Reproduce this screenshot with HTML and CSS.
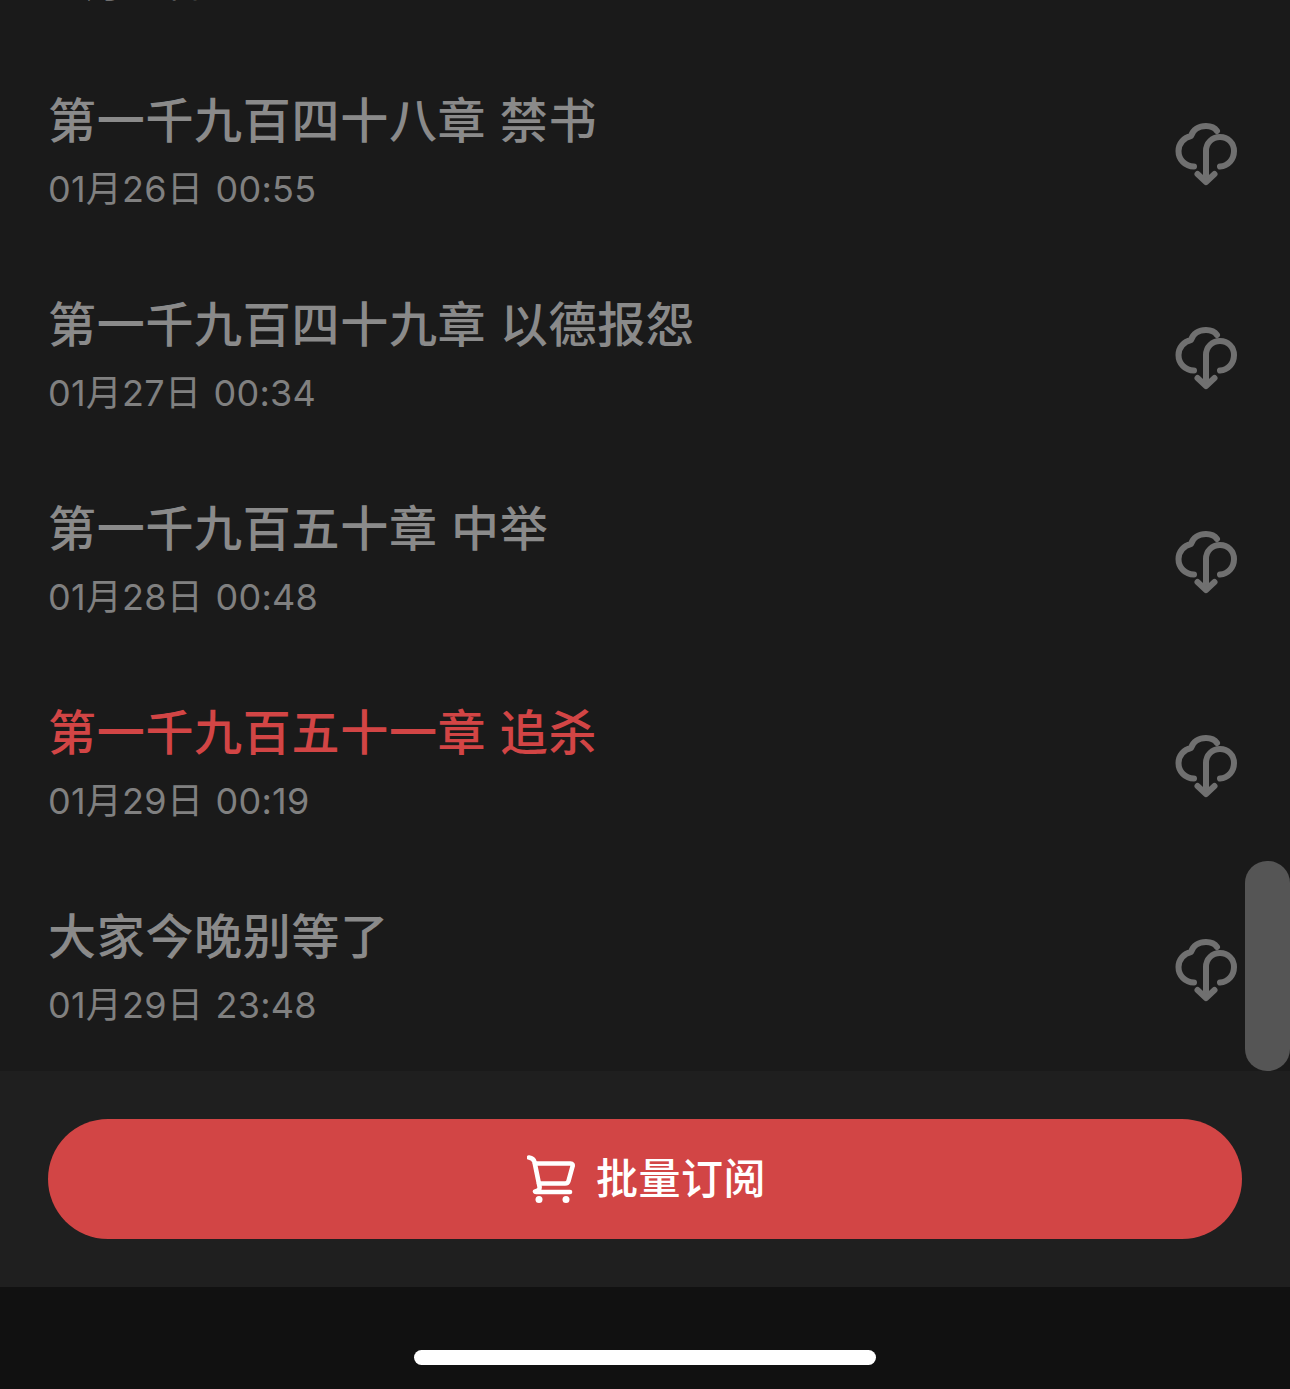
FILE: index.html
```html
<!DOCTYPE html>
<html lang="zh">
<head>
<meta charset="utf-8">
<title>目录</title>
<link rel="stylesheet" href="styles.css">
</head>
<body>
<svg class="defs" width="0" height="0" aria-hidden="true">
  <symbol id="cloud" viewBox="25 22 62 64">
    <g fill="none" stroke="currentColor" stroke-width="6" stroke-linecap="round" stroke-linejoin="round">
      <path d="M44 65.500C35 65.500 28.500 58.500 28.500 50C28.500 42.500 34 36.500 41 35C43 28.500 49 25 56 25C61 25 65 27 67 30"/>
      <path d="M56 79V50C56 42 62 36 70 36C78 36 84 42 84 50C84 58.500 78 65 70 65.500"/>
      <path d="M47.500 73L56 81L64.500 73"/>
    </g>
  </symbol>
</svg>
<main class="page">
  <section class="list">
    <article class="row">
      <div class="text"><h2 class="title">第一千九百四十七章 归来</h2><p class="date">01月25日 00:41</p></div>
      <svg class="cloud"><use href="#cloud"/></svg>
    </article>
    <article class="row">
      <div class="text"><h2 class="title">第一千九百四十八章 禁书</h2><p class="date">01月26日 00:55</p></div>
      <svg class="cloud"><use href="#cloud"/></svg>
    </article>
    <article class="row">
      <div class="text"><h2 class="title">第一千九百四十九章 以德报怨</h2><p class="date">01月27日 00:34</p></div>
      <svg class="cloud"><use href="#cloud"/></svg>
    </article>
    <article class="row">
      <div class="text"><h2 class="title">第一千九百五十章 中举</h2><p class="date">01月28日 00:48</p></div>
      <svg class="cloud"><use href="#cloud"/></svg>
    </article>
    <article class="row">
      <div class="text"><h2 class="title title-active">第一千九百五十一章 追杀</h2><p class="date">01月29日 00:19</p></div>
      <svg class="cloud"><use href="#cloud"/></svg>
    </article>
    <article class="row">
      <div class="text"><h2 class="title">大家今晚别等了</h2><p class="date">01月29日 23:48</p></div>
      <svg class="cloud"><use href="#cloud"/></svg>
    </article>
    <div class="scroll-thumb"></div>
  </section>
  <footer class="footer">
    <button class="buy" type="button">
      <svg class="cart" viewBox="0 0 48 48" aria-hidden="true">
        <g fill="none" stroke="#fff" stroke-width="4.600" stroke-linecap="round" stroke-linejoin="round">
          <path d="M2 2.500C5.500 3 6.800 4 7.500 7L12.500 31.500C13 34 11.500 36 8 36.500"/>
          <path d="M8 8.500H43.500C45.500 8.500 46 10 45.500 11.500L41.500 26C41 28 40 28.500 38 28.500H12"/>
          <path d="M9 37H43"/>
        </g>
        <circle cx="12" cy="44.500" r="3.500" fill="#fff"/>
        <circle cx="39" cy="44.500" r="3.500" fill="#fff"/>
      </svg>
      <span class="buy-label">批量订阅</span>
    </button>
  </footer>
  <div class="home-bar"><span class="home-indicator"></span></div>
</main>
</body>
</html>
```
FILE: styles.css
```css
* { box-sizing: border-box; }
html, body { margin: 0; padding: 0; background: #111; }
body { font-family: "Noto Sans CJK SC", "Inter", sans-serif; }
.defs { position: absolute; }
.page { width: 1290px; height: 1389px; display: flex; flex-direction: column; overflow: hidden; }
.list {
  position: relative;
  height: 1071px;
  flex: none;
  background: #1a1a1a;
  display: flex;
  flex-direction: column;
  justify-content: flex-end;
  overflow: hidden;
}
.row {
  flex: none;
  height: 204px;
  padding: 0 53px 0 48px;
  display: flex;
  align-items: center;
  justify-content: space-between;
}
.text { display: flex; flex-direction: column; gap: 18px; padding-bottom: 6px; }
.title {
  margin: 0;
  font-size: 48px;
  line-height: 60px;
  font-weight: 500;
  color: #8a8a8a;
  letter-spacing: 0.7px;
  word-spacing: 2px;
  white-space: nowrap;
}
.title-active { color: #d24545; }
.date {
  margin: 0;
  font-family: "Inter", "Noto Sans CJK SC", sans-serif;
  font-size: 36px;
  line-height: 48px;
  color: #808080;
  letter-spacing: 0.25px;
  word-spacing: 2px;
  white-space: nowrap;
}
.cloud { width: 62px; height: 64px; color: #707070; flex: none; margin-top: 4px; }
.scroll-thumb {
  position: absolute;
  right: 0;
  bottom: 0;
  width: 45px;
  height: 210px;
  border-radius: 22px;
  background: #555;
}
.footer {
  flex: none;
  height: 216px;
  padding: 48px;
  background: #1f1f1f;
}
.buy {
  width: 100%;
  height: 120px;
  border: 0;
  border-radius: 60px;
  background: #d24545;
  color: #fff;
  font-family: inherit;
  font-size: 42px;
  font-weight: 500;
  display: flex;
  align-items: center;
  justify-content: center;
  gap: 21px;
  padding: 0 0 0 3px;
}
.buy-label { padding-bottom: 8px; letter-spacing: 0.5px; }
.cart { width: 48px; height: 48px; flex: none; }
.home-bar {
  flex: 1;
  background: #111;
  display: flex;
  justify-content: center;
  padding-top: 63px;
}
.home-indicator { width: 462px; height: 15px; border-radius: 8px; background: #fff; }
```
